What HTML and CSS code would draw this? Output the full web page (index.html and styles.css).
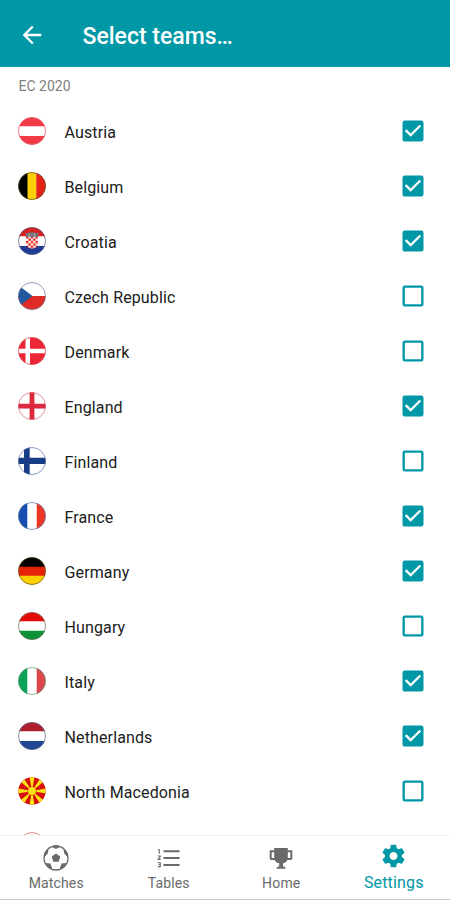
FILE: index.html
```
<!DOCTYPE html>
<html lang="en">
<head>
<meta charset="utf-8">
<title>Select teams</title>
<link rel="stylesheet" href="styles.css">
</head>
<body>
<svg class="defs" aria-hidden="true">
  <defs>
    <clipPath id="round"><circle cx="14" cy="14" r="13.7"/></clipPath>
    <pattern id="checker" width="4.8" height="4.8" patternUnits="userSpaceOnUse" x="8" y="9">
      <rect width="4.8" height="4.8" fill="#fff"/><path d="M0 0h2.400v2.400H0zM2.400 2.400h2.400v2.400H2.400z" fill="#e0211c"/>
    </pattern>
    <symbol id="on" viewBox="0 0 24 24"><path d="M19 3H5a2 2 0 0 0-2 2v14c0 1.100.9 2 2 2h14a2 2 0 0 0 2-2V5a2 2 0 0 0-2-2zm-9 14l-5-5 1.410-1.410L10 14.170l7.590-7.590L19 8l-9 9z"/></symbol>
    <symbol id="off" viewBox="0 0 24 24"><path d="M19 5v14H5V5h14m0-2H5a2 2 0 0 0-2 2v14a2 2 0 0 0 2 2h14a2 2 0 0 0 2-2V5a2 2 0 0 0-2-2z"/></symbol>
  </defs>
</svg>
<div class="screen">
  <header class="appbar">
    <svg class="back" viewBox="0 0 24 24"><path d="M20 11H7.830l5.590-5.590L12 4l-8 8 8 8 1.410-1.410L7.830 13H20v-2z"/></svg>
    <h1 class="title">Select teams…</h1>
  </header>
  <main class="content">
    <h2 class="section">EC 2020</h2>
    <ul class="teams">
      <li class="team"><svg class="flag" viewBox="0 0 28 28"><g clip-path="url(#round)"><path fill="#f23b48" d="M0 0h28v28H0z"/><path fill="#fff" d="M0 9.300h28v9.700H0z"/></g><circle class="rim" cx="14" cy="14" r="13.500" stroke="#ee6a72"/></svg><span class="name">Austria</span><svg class="check"><use href="#on"/></svg></li>
      <li class="team"><svg class="flag" viewBox="0 0 28 28"><g clip-path="url(#round)"><path d="M0 0h10v28H0z"/><path fill="#fbd007" d="M9.500 0h9v28h-9z"/><path fill="#e52217" d="M18.300 0H28v28h-9.700z"/></g><circle class="rim" cx="14" cy="14" r="13.500" stroke="#5e4a22"/></svg><span class="name">Belgium</span><svg class="check"><use href="#on"/></svg></li>
      <li class="team"><svg class="flag" viewBox="0 0 28 28"><g clip-path="url(#round)"><path fill="#d9241e" d="M0 0h28v9.500H0z"/><path fill="#fff" d="M0 9.500h28V19H0z"/><path fill="#1c3c92" d="M0 19h28v9H0z"/></g><path fill="url(#checker)" d="M8 9h12v7.500c0 3-2.700 5-6 5s-6-2-6-5z"/><path fill="#6d7888" d="M7.500 5.500l2.600.7 2.400-1 1.500.6 1.500-.6 2.400 1 2.600-.7-.8 4.200H8.300z"/><path fill="#b8a168" d="M10.500 6.500h1.400v2h-1.400zM15.800 6.500h1.400v2h-1.400z"/><circle class="rim" cx="14" cy="14" r="13.500" stroke="#555b91"/></svg><span class="name">Croatia</span><svg class="check"><use href="#on"/></svg></li>
      <li class="team"><svg class="flag" viewBox="0 0 28 28"><g clip-path="url(#round)"><path fill="#fff" d="M0 0h28v14H0z"/><path fill="#df2b24" d="M0 14h28v14H0z"/><path fill="#23579b" d="M0 3l14.500 11L0 25z"/></g><circle class="rim" cx="14" cy="14" r="13.500" stroke="#68779d"/></svg><span class="name">Czech Republic</span><svg class="check"><use href="#off"/></svg></li>
      <li class="team"><svg class="flag" viewBox="0 0 28 28"><g clip-path="url(#round)"><path fill="#ed2635" d="M0 0h28v28H0z"/><path fill="#fff" d="M7.500 0h4.500v28H7.500zM0 11.700h28v4.500H0z"/></g><circle class="rim" cx="14" cy="14" r="13.500" stroke="#df5560"/></svg><span class="name">Denmark</span><svg class="check"><use href="#off"/></svg></li>
      <li class="team"><svg class="flag" viewBox="0 0 28 28"><g clip-path="url(#round)"><path fill="#fff" d="M0 0h28v28H0z"/><path fill="#db293d" d="M11.600 0h4.800v28h-4.800zM0 11.700h28v4.700H0z"/></g><circle class="rim" cx="14" cy="14" r="13.500" stroke="#d4606b"/></svg><span class="name">England</span><svg class="check"><use href="#on"/></svg></li>
      <li class="team"><svg class="flag" viewBox="0 0 28 28"><g clip-path="url(#round)"><path fill="#fff" d="M0 0h28v28H0z"/><path fill="#193c86" d="M6 0h5.700v28H6zM0 10.800h28V17H0z"/></g><circle class="rim" cx="14" cy="14" r="13.500" stroke="#536baa"/></svg><span class="name">Finland</span><svg class="check"><use href="#off"/></svg></li>
      <li class="team"><svg class="flag" viewBox="0 0 28 28"><g clip-path="url(#round)"><path fill="#fff" d="M0 0h28v28H0z"/><path fill="#174dae" d="M0 0h9.300v28H0z"/><path fill="#ed3524" d="M18.700 0H28v28h-9.300z"/></g><circle class="rim" cx="14" cy="14" r="13.500" stroke="#5b71a9"/></svg><span class="name">France</span><svg class="check"><use href="#on"/></svg></li>
      <li class="team"><svg class="flag" viewBox="0 0 28 28"><g clip-path="url(#round)"><path d="M0 0h28v10H0z"/><path fill="#e62209" d="M0 9.700h28v9.300H0z"/><path fill="#fbd000" d="M0 18.700h28V28H0z"/></g><circle class="rim" cx="14" cy="14" r="13.500" stroke="#66551e"/></svg><span class="name">Germany</span><svg class="check"><use href="#on"/></svg></li>
      <li class="team"><svg class="flag" viewBox="0 0 28 28"><g clip-path="url(#round)"><path fill="#fff" d="M0 0h28v28H0z"/><path fill="#e50a08" d="M0 0h28v9.300H0z"/><path fill="#0d9337" d="M0 18.700h28V28H0z"/></g><circle class="rim" cx="14" cy="14" r="13.500" stroke="#6c7150"/></svg><span class="name">Hungary</span><svg class="check"><use href="#off"/></svg></li>
      <li class="team"><svg class="flag" viewBox="0 0 28 28"><g clip-path="url(#round)"><path fill="#fff" d="M0 0h28v28H0z"/><path fill="#0ca158" d="M0 0h9.300v28H0z"/><path fill="#dc454b" d="M18.700 0H28v28h-9.300z"/></g><circle class="rim" cx="14" cy="14" r="13.500" stroke="#609b73"/></svg><span class="name">Italy</span><svg class="check"><use href="#on"/></svg></li>
      <li class="team"><svg class="flag" viewBox="0 0 28 28"><g clip-path="url(#round)"><path fill="#fff" d="M0 0h28v28H0z"/><path fill="#ad1e2f" d="M0 0h28v9.300H0z"/><path fill="#204993" d="M0 18.900h28V28H0z"/></g><circle class="rim" cx="14" cy="14" r="13.500" stroke="#626582"/></svg><span class="name">Netherlands</span><svg class="check"><use href="#on"/></svg></li>
      <li class="team"><svg class="flag" viewBox="0 0 28 28"><g clip-path="url(#round)"><path fill="#d8100d" d="M0 0h28v28H0z"/><path fill="#fce514" d="M11.500 0h5L14 14zM11.500 28h5L14 14zM0 11.500v5L14 14zM28 11.500v5L14 14zM1 3.500L5.500 1 14 14zM27 3.500L22.500 1 14 14zM1 24.500L5.500 27 14 14zM27 24.500L22.500 27 14 14z"/></g><circle cx="14" cy="14" r="4.300" fill="#fce514" stroke="#e35a10" stroke-width=".8"/></svg><span class="name">North Macedonia</span><svg class="check"><use href="#off"/></svg></li>
      <li class="team"><svg class="flag" viewBox="0 0 28 28"><g clip-path="url(#round)"><path fill="#fff" d="M0 0h28v14H0z"/><path fill="#dc2440" d="M0 14h28v14H0z"/></g><circle class="rim" cx="14" cy="14" r="13.500" stroke="#d4505b"/></svg></li>
    </ul>
  </main>
  <nav class="tabs">
    <a class="tab"><svg class="icon" viewBox="0 0 28 28"><circle cx="14" cy="14" r="12" fill="none" stroke="currentColor" stroke-width="1.300"/><path d="M14 9.500l4.300 3.100-1.600 5.100h-5.400l-1.600-5.100zM9.700 2.700L14 5l4.300-2.300-2-1.100h-4.600zM2 10l2.700-4.300 1.800-.8-.7 4.600L2 13.500zM26 10l-2.700-4.300-1.800-.8.700 4.600 3.800 4zM3.500 19l4.800.5 1.900 4.700-1.600.7-4-3.300zM24.500 19l-4.800.5-1.900 4.700 1.600.7 4-3.300z"/></svg><span class="label">Matches</span></a>
    <a class="tab"><svg class="icon" viewBox="0 0 28 28"><path d="M8.500 6.200h16v2h-16zM8.500 13h16v2h-16zM8.500 19.900h16v2h-16z"/><path fill="none" stroke="currentColor" stroke-width="1.100" d="M3 5.700h1.300v4M2.700 12h2.600v.6l-2.200 2.800h2.600M2.700 18.700h2.600v1.800H3.600h1.700v2.100H2.700"/></svg><span class="label">Tables</span></a>
    <a class="tab"><svg class="icon" viewBox="0 0 28 28"><path fill-rule="evenodd" d="M7.200 4h13.600v2.300h4.500v8c0 1-.7 1.700-1.700 1.700h-3.200c-.8 1.900-2.500 3-4.400 3.300v3.200c1.400 0 2.700.5 2.700 2.200H9.500c0-1.700 1.300-2.200 2.700-2.200v-3.200c-2-.3-3.700-1.400-4.500-3.300H4.400c-1 0-1.700-.7-1.700-1.700v-8h4.500zm0 4.200H4.700V14h2.500zm13.600 0V14h2.500V8.200z"/></svg><span class="label">Home</span></a>
    <a class="tab active"><svg class="icon" viewBox="0 0 24 24"><path d="M19.430 12.980c.040-.320.070-.640.070-.980s-.030-.660-.070-.980l2.110-1.650c.190-.150.240-.420.120-.640l-2-3.460c-.120-.220-.390-.300-.610-.220l-2.490 1c-.520-.400-1.080-.730-1.690-.980l-.380-2.650C14.460 2.180 14.250 2 14 2h-4c-.250 0-.460.180-.490.420l-.380 2.650c-.610.250-1.170.590-1.690.980l-2.490-1c-.230-.090-.490 0-.610.220l-2 3.460c-.130.220-.070.490.120.640l2.110 1.650c-.040.320-.070.650-.070.980s.030.660.070.980l-2.110 1.650c-.190.150-.240.420-.120.640l2 3.460c.120.220.390.300.610.220l2.490-1c.520.400 1.080.730 1.690.980l.380 2.650c.030.240.240.420.490.420h4c.250 0 .460-.180.490-.420l.380-2.650c.610-.250 1.170-.590 1.690-.980l2.490 1c.230.090.490 0 .610-.220l2-3.460c.120-.220.070-.490-.120-.640l-2.110-1.650zM12 15.500c-1.930 0-3.500-1.570-3.500-3.500s1.570-3.500 3.500-3.500 3.500 1.570 3.500 3.500-1.570 3.500-3.500 3.500z"/></svg><span class="label">Settings</span></a>
  </nav>
</div>
</body>
</html>
```
FILE: styles.css
```
* { box-sizing: border-box; margin: 0; padding: 0; }
body { font-family: Roboto, "Liberation Sans", sans-serif; background: #fff; color: #202020; overflow: hidden; }
.defs { display: block; width: 0; height: 0; }
.screen { display: flex; flex-direction: column; width: 450px; height: 900px; border-bottom: 1px solid #c8c8c8; }
.appbar { display: flex; align-items: center; flex: none; height: 67px; padding: 2px 18px 0; background: #0097a7; color: #fff; }
.back { width: 28px; height: 28px; fill: currentColor; }
.title { padding-top: 4px; margin-left: 36.5px; font-size: 23px; font-weight: 500; line-height: 28px; }
.content { flex: 1; min-height: 0; overflow: hidden; }
.section { padding: 10px 18.5px 0; height: 36px; font-size: 14px; line-height: 18px; font-weight: 400; color: #808080; }
.teams { list-style: none; }
.team { display: flex; align-items: center; height: 55px; padding: 0 23px 0 18px; }
.flag { width: 28px; height: 28px; }
.rim { fill: none; stroke-width: .7; }
.name { flex: 1; padding-top: 3px; margin-left: 18.5px; font-size: 16px; letter-spacing: .13px; }
.check { width: 28px; height: 28px; fill: #0097a7; }
.tabs { display: flex; flex: none; height: 64px; border-top: 1px solid #f3f3f3; color: #6a6a6a; }
.tab { display: flex; flex: 1; flex-direction: column; align-items: center; padding-top: 8px; }
.icon { width: 28px; height: 28px; fill: currentColor; }
.label { margin-top: 2px; font-size: 14px; line-height: 18px; letter-spacing: .15px; }
.active { padding-top: 6px; color: #0097a7; }
.active .icon { width: 27px; height: 28px; }
.active .label { margin-top: 3px; font-size: 16px; line-height: 20px; }
```
